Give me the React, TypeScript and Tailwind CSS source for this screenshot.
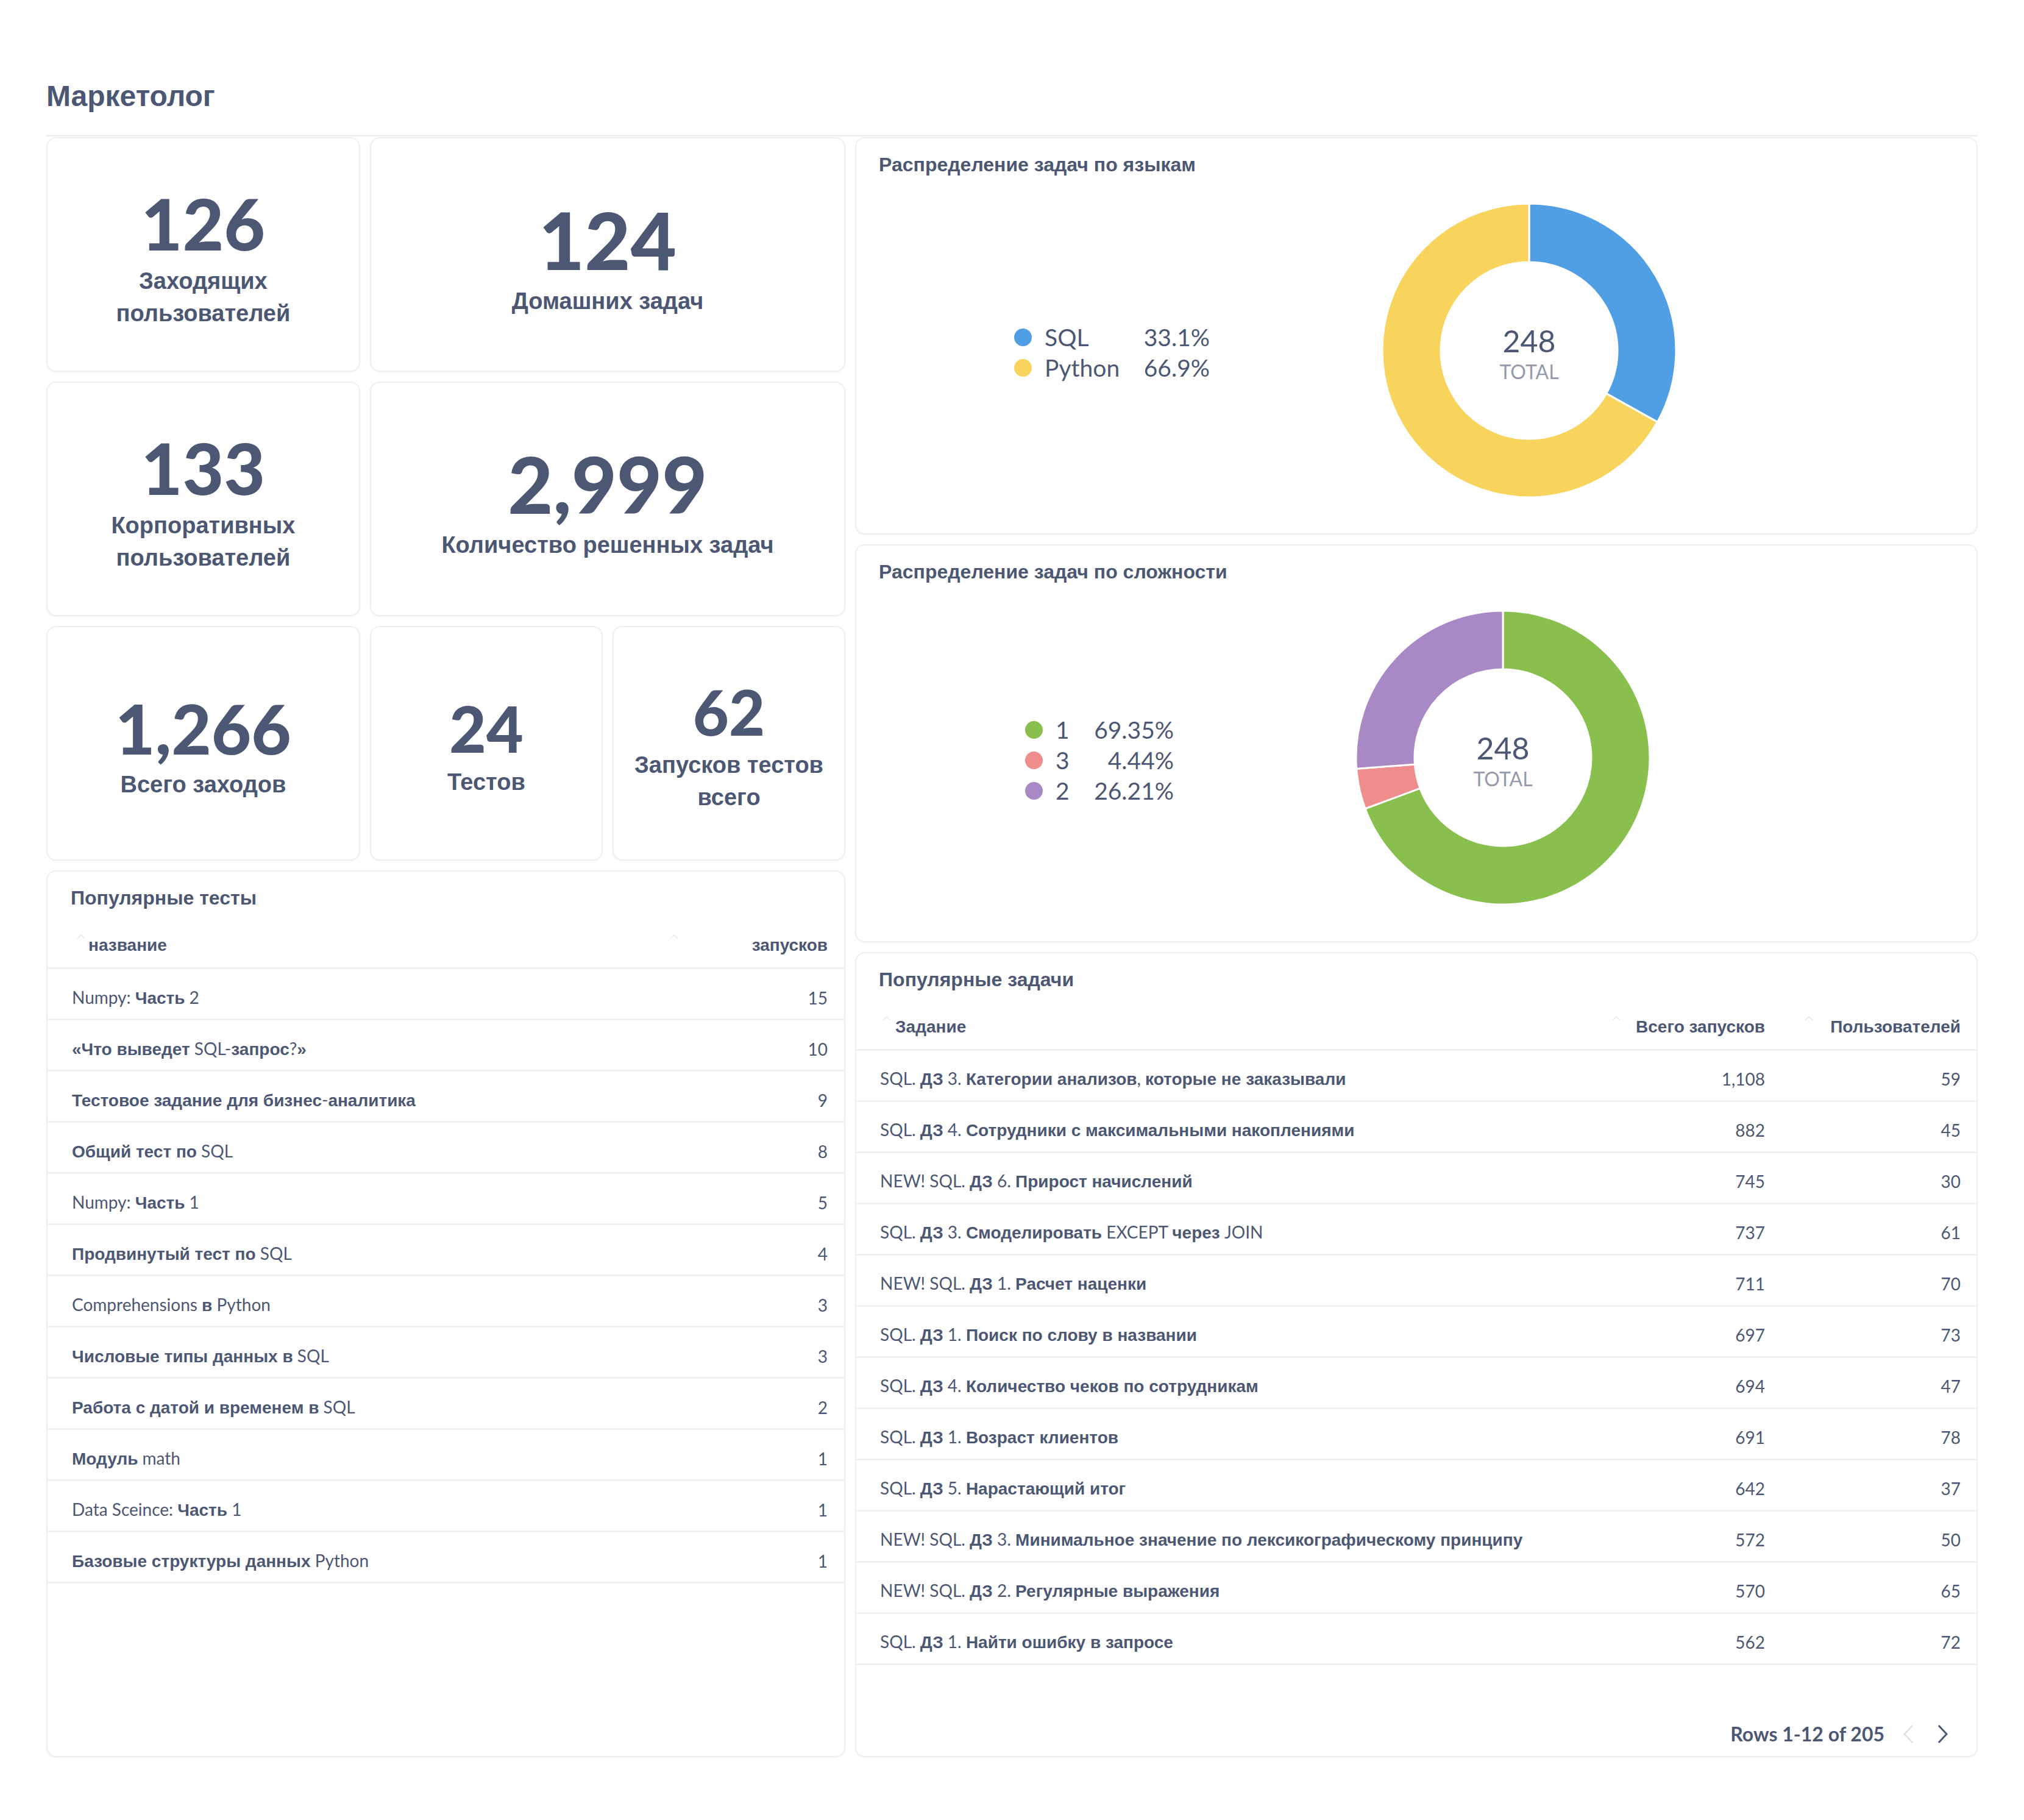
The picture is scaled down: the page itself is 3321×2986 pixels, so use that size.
import React from "react";

// Cyrillic runs fall back to Arial-like bold in the original; Latin stays in Lato
const CYR_RUN = /([\u0400-\u04FF«»]+(?: +[\u0400-\u04FF«»]+)*)/g;

function Txt({ s }: { s: string }) {
  const parts = s.split(CYR_RUN);
  return (
    <>
      {parts.map((p, i) =>
        i % 2 === 1 ? (
          <span key={i} className="font-['Liberation_Sans',sans-serif] font-bold">
            {p}
          </span>
        ) : p ? (
          <span key={i} className="font-['Lato',sans-serif]">
            {p}
          </span>
        ) : null
      )}
    </>
  );
}

const card = "rounded-[16px] border-2 border-[#eceef1] bg-white shadow-[0_1px_3px_rgba(0,0,0,0.04)]";

function Scalar({ value, label, numCls, pos }: { value: string; label: string; numCls: string; pos: string }) {
  return (
    <div className={`${pos} ${card} flex flex-col items-center justify-center px-[24px] pt-[13px] text-center`}>
      <div className={`font-['Lato',sans-serif] font-black leading-none ${numCls}`}>{value}</div>
      <div className="mt-[10px] font-['Liberation_Sans',sans-serif] text-[38px] font-bold leading-[53px]">{label}</div>
    </div>
  );
}

interface Slice {
  label: string;
  pct: string;
  value: number;
  color: string;
}

function arcPath(cx: number, cy: number, R: number, r: number, a0: number, a1: number) {
  const rad = (a: number) => (a * Math.PI) / 180;
  const pt = (rr: number, a: number) => [cx + rr * Math.sin(rad(a)), cy - rr * Math.cos(rad(a))];
  const large = a1 - a0 > 180 ? 1 : 0;
  const [x0, y0] = pt(R, a0);
  const [x1, y1] = pt(R, a1);
  const [x2, y2] = pt(r, a1);
  const [x3, y3] = pt(r, a0);
  return `M${x0} ${y0} A${R} ${R} 0 ${large} 1 ${x1} ${y1} L${x2} ${y2} A${r} ${r} 0 ${large} 0 ${x3} ${y3} Z`;
}

function Donut({ slices, total }: { slices: Slice[]; total: number }) {
  let acc = 0;
  return (
    <div className="relative h-[484px] w-[484px] shrink-0">
      <svg width="484" height="484" viewBox="0 0 484 484">
        {slices.map((s) => {
          const a0 = (acc / 100) * 360;
          acc += s.value;
          const a1 = (acc / 100) * 360;
          return <path key={s.label} d={arcPath(242, 242, 241, 145, a0, a1)} fill={s.color} stroke="#ffffff" strokeWidth="3" />;
        })}
      </svg>
      <div className="absolute inset-0 flex flex-col items-center justify-center pt-[10px] font-['Lato',sans-serif]">
        <div className="text-[50px] leading-none">{total}</div>
        <div className="mt-[10px] text-[32px] leading-none text-[#949aab]">TOTAL</div>
      </div>
    </div>
  );
}

function PieCard({
  title,
  slices,
  pos,
  legendCls,
  donutCls,
}: {
  title: string;
  slices: Slice[];
  pos: string;
  legendCls: string;
  donutCls: string;
}) {
  return (
    <div className={`${pos} ${card} flex flex-col pb-[16px]`}>
      <div className="px-[37px] pt-[22px] text-[32px] leading-[40px]">
        <Txt s={title} />
      </div>
      <div className="flex flex-1 items-center">
        <div className={`mt-[8px] grid grid-cols-[29px_auto_1fr] auto-rows-[50px] items-center gap-x-[21px] font-['Lato',sans-serif] text-[39px] ${legendCls}`}>
          {slices.map((s) => (
            <React.Fragment key={s.label}>
              <span className="h-[29px] w-[29px] rounded-full" style={{ backgroundColor: s.color }} />
              <span>{s.label}</span>
              <span className="text-right">{s.pct}</span>
            </React.Fragment>
          ))}
        </div>
        <div className={donutCls}>
          <Donut slices={slices} total={248} />
        </div>
      </div>
    </div>
  );
}

function SortIcon() {
  return (
    <svg width="14" height="8" viewBox="0 0 14 8" className="mb-[28px] shrink-0">
      <polyline points="1,7 7,1 13,7" fill="none" stroke="#e6e8eb" strokeWidth="1.5" />
    </svg>
  );
}

const tests: [string, string][] = [
  ["Numpy: Часть 2", "15"],
  ["«Что выведет SQL-запрос?»", "10"],
  ["Тестовое задание для бизнес-аналитика", "9"],
  ["Общий тест по SQL", "8"],
  ["Numpy: Часть 1", "5"],
  ["Продвинутый тест по SQL", "4"],
  ["Comprehensions в Python", "3"],
  ["Числовые типы данных в SQL", "3"],
  ["Работа с датой и временем в SQL", "2"],
  ["Модуль math", "1"],
  ["Data Sceince: Часть 1", "1"],
  ["Базовые структуры данных Python", "1"],
];

const tasks: [string, string, string][] = [
  ["SQL. ДЗ 3. Категории анализов, которые не заказывали", "1,108", "59"],
  ["SQL. ДЗ 4. Сотрудники с максимальными накоплениями", "882", "45"],
  ["NEW! SQL. ДЗ 6. Прирост начислений", "745", "30"],
  ["SQL. ДЗ 3. Смоделировать EXCEPT через JOIN", "737", "61"],
  ["NEW! SQL. ДЗ 1. Расчет наценки", "711", "70"],
  ["SQL. ДЗ 1. Поиск по слову в названии", "697", "73"],
  ["SQL. ДЗ 4. Количество чеков по сотрудникам", "694", "47"],
  ["SQL. ДЗ 1. Возраст клиентов", "691", "78"],
  ["SQL. ДЗ 5. Нарастающий итог", "642", "37"],
  ["NEW! SQL. ДЗ 3. Минимальное значение по лексикографическому принципу", "572", "50"],
  ["NEW! SQL. ДЗ 2. Регулярные выражения", "570", "65"],
  ["SQL. ДЗ 1. Найти ошибку в запросе", "562", "72"],
];

const rowCls = "flex h-[84px] items-center border-b-[3px] border-[#f0f1f3] pt-[12px] text-[28px] leading-[32px] whitespace-nowrap";
const headCls = "flex h-[97px] items-end border-b-[3px] border-[#f0f1f3] pb-[18px] text-[28px] leading-[32px] whitespace-nowrap";

function TestsTable() {
  return (
    <div className={`col-start-1 col-span-10 row-start-10 row-span-11 ${card} flex flex-col`}>
      <div className="px-[38px] pt-[22px] text-[32px] leading-[40px]">
        <Txt s="Популярные тесты" />
      </div>
      <div className={`${headCls} pl-[48px] pr-[27px]`}>
        <div className="flex flex-1 items-center gap-[5px]">
          <SortIcon />
          <Txt s="название" />
        </div>
        <div className="flex w-[268px] items-center justify-between pl-[9px]">
          <SortIcon />
          <Txt s="запусков" />
        </div>
      </div>
      {tests.map(([name, n]) => (
        <div key={name} className={`${rowCls} pl-[40px] pr-[27px]`}>
          <div className="flex-1">
            <Txt s={name} />
          </div>
          <div className="text-right font-['Lato',sans-serif]">{n}</div>
        </div>
      ))}
    </div>
  );
}

function TasksTable() {
  return (
    <div className={`col-start-11 col-span-14 row-start-11 row-span-10 ${card} flex flex-col`}>
      <div className="px-[37px] pt-[22px] text-[32px] leading-[40px]">
        <Txt s="Популярные задачи" />
      </div>
      <div className={`${headCls} pl-[43px] pr-[26px]`}>
        <div className="flex flex-1 items-center gap-[7px]">
          <SortIcon />
          <Txt s="Задание" />
        </div>
        <div className="flex w-[260px] items-center justify-between pl-[9px]">
          <SortIcon />
          <Txt s="Всего запусков" />
        </div>
        <div className="flex w-[321px] items-center justify-between pl-[65px]">
          <SortIcon />
          <Txt s="Пользователей" />
        </div>
      </div>
      {tasks.map(([name, runs, users]) => (
        <div key={name} className={`${rowCls} pl-[39px] pr-[26px]`}>
          <div className="flex-1">
            <Txt s={name} />
          </div>
          <div className="w-[260px] text-right font-['Lato',sans-serif]">{runs}</div>
          <div className="w-[321px] text-right font-['Lato',sans-serif]">{users}</div>
        </div>
      ))}
      <div className="mt-auto flex h-[60px] items-center justify-end pb-[11px] pr-[46px] font-['Lato',sans-serif] text-[32px] font-bold">
        <span>Rows 1-12 of 205</span>
        <svg width="18" height="32" viewBox="0 0 18 32" className="ml-[30px]">
          <polyline points="16,2 3,16 16,30" fill="none" stroke="#dcdfe4" strokeWidth="2.5" />
        </svg>
        <svg width="18" height="32" viewBox="0 0 18 32" className="ml-[39px]">
          <polyline points="2,2 15,16 2,30" fill="none" stroke="#4c5773" strokeWidth="3" />
        </svg>
      </div>
    </div>
  );
}

const langSlices: Slice[] = [
  { label: "SQL", pct: "33.1%", value: 33.1, color: "#509ee3" },
  { label: "Python", pct: "66.9%", value: 66.9, color: "#f9d45c" },
];

const diffSlices: Slice[] = [
  { label: "1", pct: "69.35%", value: 69.35, color: "#88bf4d" },
  { label: "3", pct: "4.44%", value: 4.44, color: "#ef8c8c" },
  { label: "2", pct: "26.21%", value: 26.21, color: "#a989c5" },
];

export default function App() {
  return (
    <div className="min-h-[2986px] w-full bg-white px-[76px] font-['Lato',sans-serif] text-[#4c5773]">
      <h1 className="border-b-[3px] border-[#eef0f2] pb-[34px] pt-[129px] font-['Liberation_Sans',sans-serif] text-[48px] font-bold leading-[58px]">
        Маркетолог
      </h1>

      <div className="mt-px grid grid-cols-24 grid-rows-[repeat(20,117.7px)] gap-4">
        <Scalar pos="col-start-1 col-span-4 row-start-1 row-span-3" value="126" label="Заходящих пользователей" numCls="text-[117px]" />
        <Scalar pos="col-start-5 col-span-6 row-start-1 row-span-3" value="124" label="Домашних задач" numCls="text-[130px]" />
        <PieCard
          pos="col-start-11 col-span-14 row-start-1 row-span-5"
          title="Распределение задач по языкам"
          slices={langSlices}
          legendCls="ml-[259px] w-[321px]"
          donutCls="ml-[282px]"
        />
        <Scalar pos="col-start-1 col-span-4 row-start-4 row-span-3" value="133" label="Корпоративных пользователей" numCls="text-[117px]" />
        <Scalar pos="col-start-5 col-span-6 row-start-4 row-span-3" value="2,999" label="Количество решенных задач" numCls="text-[128px]" />
        <PieCard
          pos="col-start-11 col-span-14 row-start-6 row-span-5"
          title="Распределение задач по сложности"
          slices={diffSlices}
          legendCls="ml-[277px] w-[244px]"
          donutCls="ml-[298px]"
        />
        <Scalar pos="col-start-1 col-span-4 row-start-7 row-span-3" value="1,266" label="Всего заходов" numCls="text-[113px]" />
        <Scalar pos="col-start-5 col-span-3 row-start-7 row-span-3" value="24" label="Тестов" numCls="text-[105px]" />
        <Scalar pos="col-start-8 col-span-3 row-start-7 row-span-3" value="62" label="Запусков тестов всего" numCls="text-[102px]" />
        <TestsTable />
        <TasksTable />
      </div>
    </div>
  );
}
